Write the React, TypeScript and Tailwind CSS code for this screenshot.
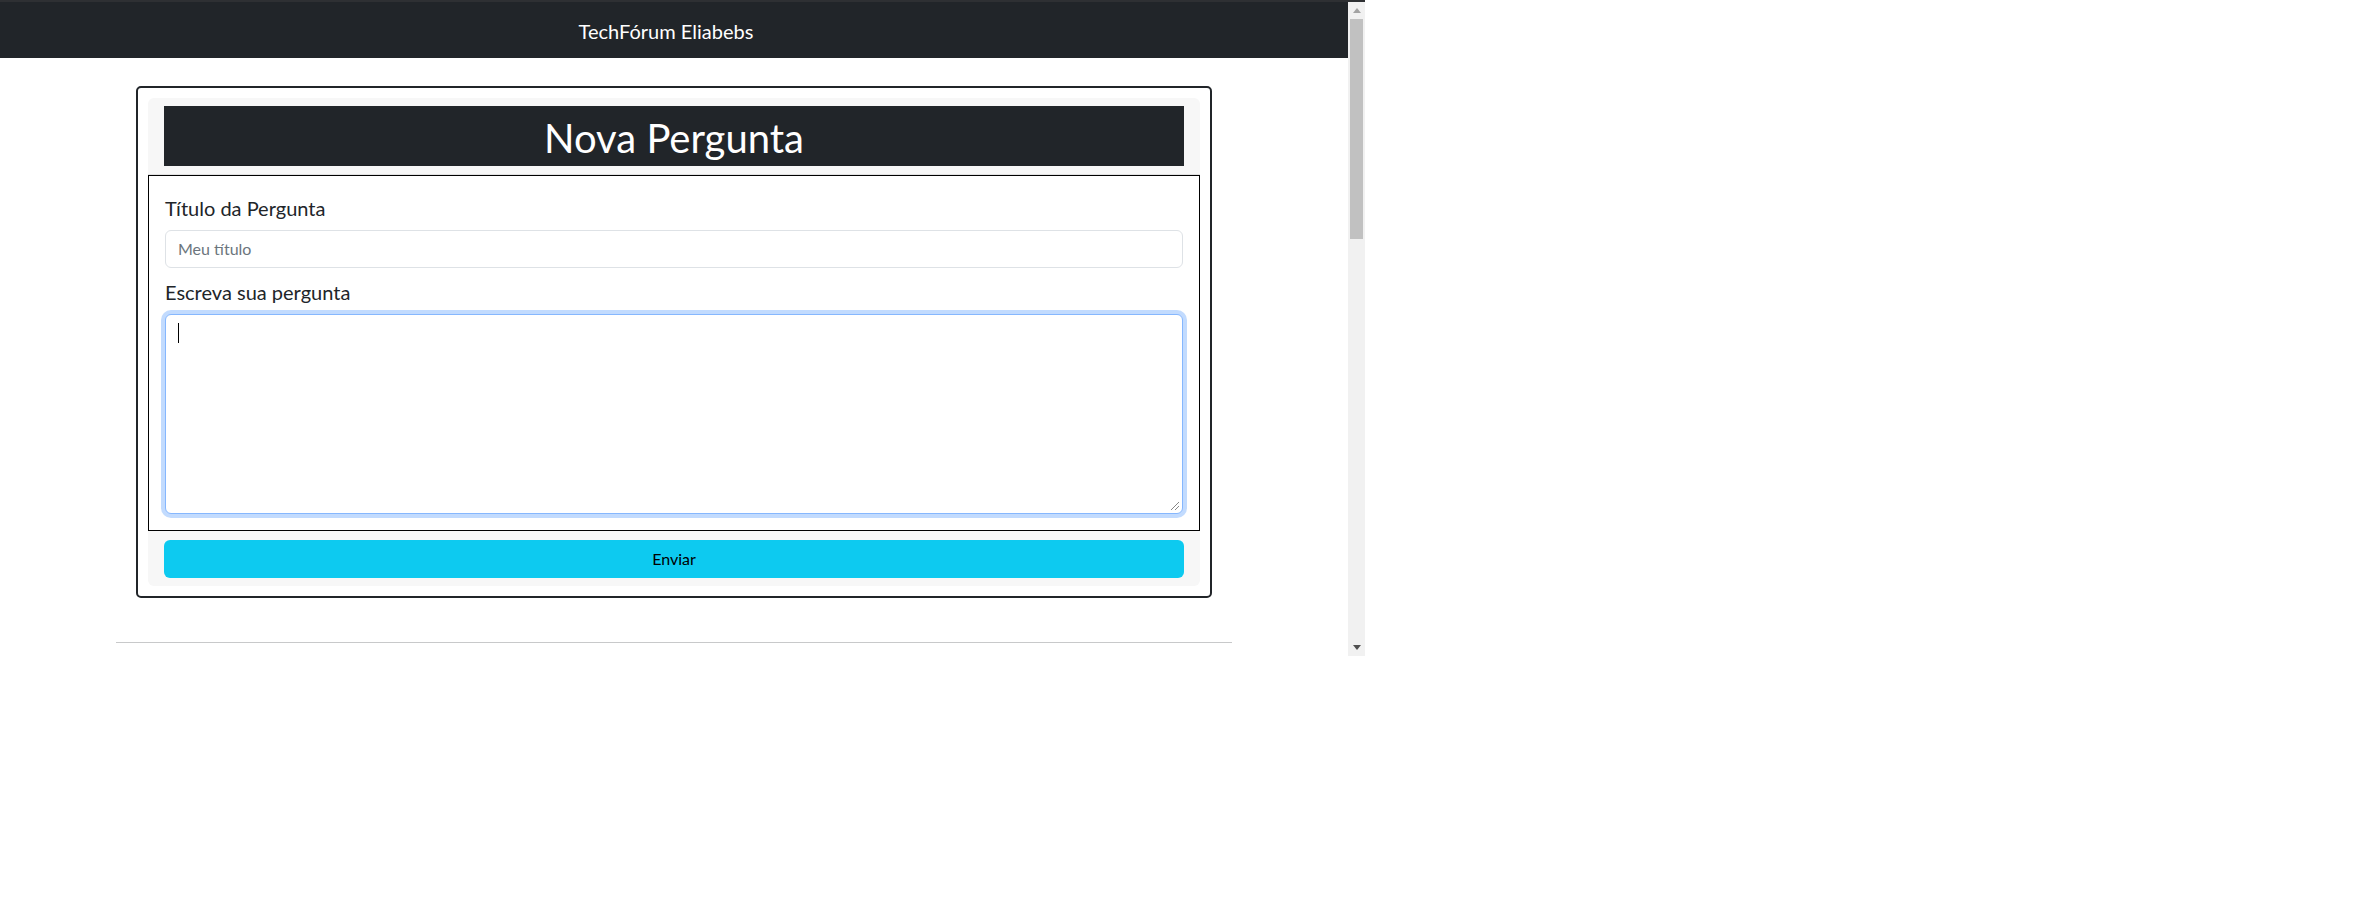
import React from "react";

export default function App() {
  return (
    <div className="w-[2365px] h-[900px] bg-white font-['Lato','Noto_Sans',sans-serif] text-[#212529]">
      <div className="w-[1365px] h-[2px] bg-[#2e3033]" />
      <div className="flex w-[1365px] h-[654px]">
        <div className="w-[1348px] h-full overflow-hidden bg-white">
          <nav className="h-[56px] bg-[#212529] flex items-center justify-center">
            <span className="text-[20px] leading-[30px] text-white mr-4 translate-y-[1px]">TechFórum Eliabebs</span>
          </nav>
          <div className="w-[1140px] mx-auto px-[12px]">
            <div className="mt-[28px] mx-[20px] border-2 border-[#212529] rounded-[5px] p-[10px]">
              <div className="bg-[#f7f7f7] rounded-[6px]">
                <div className="px-4 pt-2 pb-2 border-b border-[#e0e0e0]">
                  <div className="h-[60px] bg-[#212529] text-white text-[40px] leading-[60px] text-center">
                    <span className="inline-block translate-y-[2px]">Nova Pergunta</span>
                  </div>
                </div>
                <div className="border border-black bg-white p-4">
                  <div className="text-[20px] leading-[30px] mb-2">
                    <span className="inline-block translate-y-[1px]">Título da Pergunta</span>
                  </div>
                  <div className="h-[38px] border border-[#dee2e6] rounded-[6px] bg-white px-3 flex items-center text-[16px] text-[#6c757d]">
                    Meu título
                  </div>
                  <div className="text-[20px] leading-[30px] mt-2 mb-2">
                    <span className="inline-block translate-y-[1px]">Escreva sua pergunta</span>
                  </div>
                  <div className="relative h-[200px] border border-[#86b7fe] rounded-[6px] bg-white shadow-[0_0_0_4px_rgba(13,110,253,0.25)] px-3 py-[6px]">
                    <div className="h-[24px] flex items-center">
                      <span className="block w-[1px] h-[20px] bg-black" />
                    </div>
                    <svg className="absolute right-[2px] bottom-[2px]" width="10" height="10" viewBox="0 0 10 10">
                      <line x1="9" y1="1" x2="1" y2="9" stroke="#888" strokeWidth="1" />
                      <line x1="9" y1="5" x2="5" y2="9" stroke="#888" strokeWidth="1" />
                    </svg>
                  </div>
                </div>
                <div className="px-4 pt-[9px] pb-2">
                  <div className="h-[38px] w-full bg-[#0dcaf0] rounded-[6px] flex items-center justify-center text-[16px] text-black">
                    Enviar
                  </div>
                </div>
              </div>
            </div>
            <div className="mt-[44px] border-t border-[#c8c9ca]" />
          </div>
        </div>
        <div className="w-[17px] h-full bg-[#f1f1f1] flex flex-col">
          <div className="h-[17px] flex items-center justify-center">
            <svg width="8" height="5" viewBox="0 0 8 5">
              <polygon points="4,0 8,5 0,5" fill="#a3a3a3" />
            </svg>
          </div>
          <div className="mx-[2px] h-[220px] bg-[#c1c1c1]" />
          <div className="flex-1" />
          <div className="h-[17px] flex items-center justify-center">
            <svg width="8" height="5" viewBox="0 0 8 5">
              <polygon points="0,0 8,0 4,5" fill="#505050" />
            </svg>
          </div>
        </div>
      </div>
    </div>
  );
}
